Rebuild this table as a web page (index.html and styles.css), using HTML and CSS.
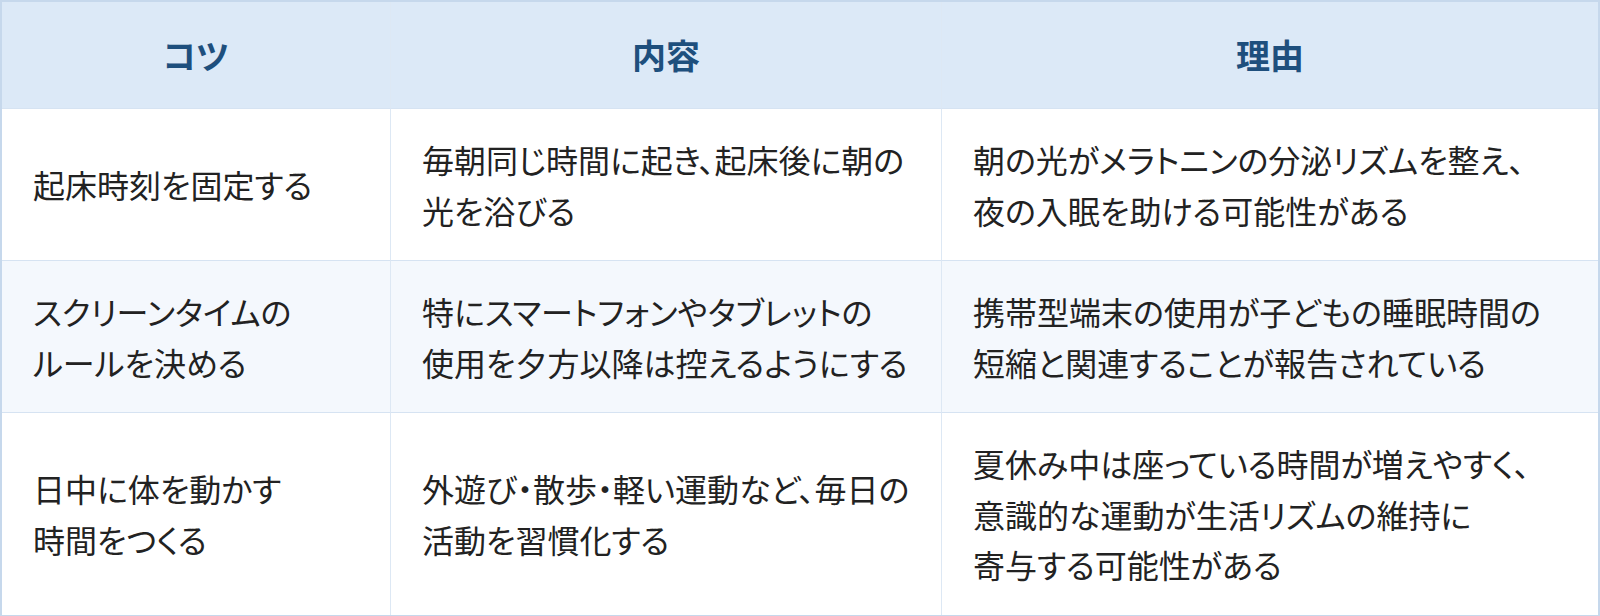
FILE: index.html
```html
<!DOCTYPE html>
<html lang="ja">
<head>
<meta charset="utf-8">
<title>夏休みの生活リズム</title>
<link rel="stylesheet" href="styles.css">
</head>
<body>
<table class="tips">
  <colgroup>
    <col class="c1">
    <col class="c2">
    <col class="c3">
  </colgroup>
  <thead>
    <tr>
      <th>コツ</th>
      <th>内容</th>
      <th>理由</th>
    </tr>
  </thead>
  <tbody>
    <tr>
      <td>起床時刻を固定する</td>
      <td>毎朝同じ時間に起き、起床後に朝の<br>光を浴びる</td>
      <td>朝の光がメラトニンの分泌リズムを整え、<br>夜の入眠を助ける可能性がある</td>
    </tr>
    <tr class="alt">
      <td>スクリーンタイムの<br>ルールを決める</td>
      <td>特にスマートフォンやタブレットの<br>使用を夕方以降は控えるようにする</td>
      <td>携帯型端末の使用が子どもの睡眠時間の<br>短縮と関連することが報告されている</td>
    </tr>
    <tr class="last">
      <td>日中に体を動かす<br>時間をつくる</td>
      <td>外遊び・散歩・軽い運動など、毎日の<br>活動を習慣化する</td>
      <td>夏休み中は座っている時間が増えやすく、<br>意識的な運動が生活リズムの維持に<br>寄与する可能性がある</td>
    </tr>
  </tbody>
</table>
</body>
</html>
```
FILE: styles.css
```css
html, body {
  margin: 0;
  padding: 0;
  background: #ffffff;
}
.tips {
  width: 1600px;
  height: 616px;
  box-sizing: border-box;
  table-layout: fixed;
  border-collapse: separate;
  border-spacing: 0;
  border: 2px solid #c6d8ec;
  font-family: "Noto Sans CJK JP", "Noto Sans", sans-serif;
  font-feature-settings: "palt";
  color: #222222;
}
.c1 { width: 389px; }
.c2 { width: 551px; }
.c3 { width: 656px; }
.tips th,
.tips td {
  border-right: 1px solid #dde8f4;
  border-bottom: 1px solid #d6e3f2;
  white-space: nowrap;
  vertical-align: middle;
}
.tips th:last-child,
.tips td:last-child {
  border-right: none;
}
.tips th {
  background: #dce9f7;
  color: #1e4f7d;
  font-size: 34px;
  font-weight: 700;
  line-height: 50px;
  padding: 28px 0;
  text-align: center;
  height: 50px;
}
.tips td {
  font-size: 32px;
  font-weight: 400;
  line-height: 50.5px;
  padding: 25px 30px 25px 31px;
  text-align: left;
}
.tips tr.alt td {
  background: #f4f8fd;
}
.tips tr.last td {
  border-bottom: none;
}
```
